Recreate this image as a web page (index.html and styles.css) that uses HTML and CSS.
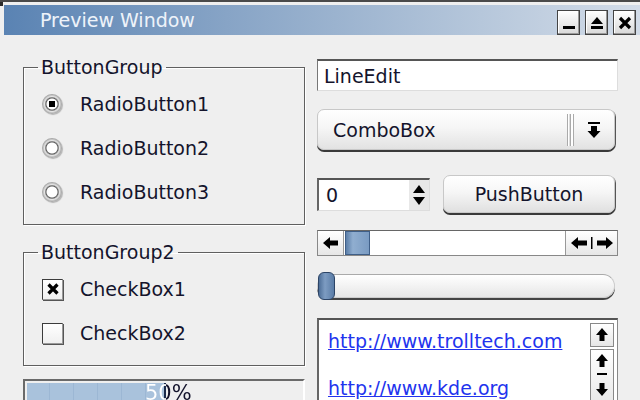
FILE: index.html
```html
<!DOCTYPE html>
<html>
<head>
<meta charset="utf-8">
<link rel="stylesheet" href="styles.css">
</head>
<body>
<div class="frame">
  <div class="titlebar">
    <span class="title">Preview Window</span>
    <div class="tbuttons">
      <span class="tbtn"><svg width="14" height="14" viewBox="0 0 14 14"><rect x="1" y="10" width="12" height="3" fill="#000"/></svg></span>
      <span class="tbtn"><svg width="14" height="14" viewBox="0 0 14 14"><polygon points="7,1 13,8 1,8" fill="#000"/><rect x="1" y="10" width="12" height="3" fill="#000"/></svg></span>
      <span class="tbtn"><svg width="14" height="14" viewBox="0 0 14 14"><path d="M2 2 L12 12 M12 2 L2 12" stroke="#000" stroke-width="3.2"/></svg></span>
    </div>
  </div>
  <div class="content">
    <div class="col left">
      <fieldset class="group g1">
        <legend>ButtonGroup</legend>
        <div class="row"><span class="radio on"><span class="dot"></span></span><span>RadioButton1</span></div>
        <div class="row"><span class="radio"></span><span>RadioButton2</span></div>
        <div class="row"><span class="radio"></span><span>RadioButton3</span></div>
      </fieldset>
      <fieldset class="group g2">
        <legend>ButtonGroup2</legend>
        <div class="row"><span class="check"><svg width="14" height="14" viewBox="0 0 14 14"><path d="M2.5 2.5 L11.5 11.5 M11.5 2.5 L2.5 11.5" stroke="#000" stroke-width="3.2"/></svg></span><span>CheckBox1</span></div>
        <div class="row"><span class="check"></span><span>CheckBox2</span></div>
      </fieldset>
      <div class="progress">
        <div class="fill" style="width:50%"></div>
        <span class="ptext">50%</span>
      </div>
    </div>
    <div class="col right">
      <div class="lineedit">LineEdit</div>
      <div class="combo">
        <span class="ctext">ComboBox</span>
        <span class="csep"></span>
        <svg class="carrow" width="14" height="18" viewBox="0 0 14 18"><rect x="1" y="1" width="12" height="2" fill="#000"/><polygon points="4,5 10,5 10,10 13.5,10 7,17 0.5,10 4,10" fill="#000"/></svg>
      </div>
      <div class="spinrow">
        <div class="spin">
          <span class="stext">0</span>
          <span class="sarrows"><svg width="14" height="24" viewBox="0 0 14 24"><polygon points="7,2 13,10 1,10" fill="#000"/><polygon points="1,14 13,14 7,22" fill="#000"/></svg></span>
        </div>
        <div class="push">PushButton</div>
      </div>
      <div class="hscroll">
        <span class="sbtn lb"><svg width="18" height="14" viewBox="0 0 18 14"><polygon points="1,7 8,1 8,4.5 16,4.5 16,9.5 8,9.5 8,13" fill="#000"/></svg></span>
        <span class="handle"></span>
        <span class="trough"></span>
        <span class="sbtn rb"><svg width="44" height="14" viewBox="0 0 44 14"><polygon points="1,7 8,1 8,4.5 17,4.5 17,9.5 8,9.5 8,13" fill="#000"/><rect x="21" y="1" width="1.5" height="12" fill="#000"/><polygon points="43,7 36,1 36,4.5 27,4.5 27,9.5 36,9.5 36,13" fill="#000"/></svg></span>
      </div>
      <div class="slider">
        <span class="groove"></span>
        <span class="knob"></span>
      </div>
      <div class="listbox">
        <div class="links">
          <a class="link">http://www.trolltech.com</a>
          <a class="link">http://www.kde.org</a>
        </div>
        <div class="vscroll">
          <span class="vbtn"><svg width="14" height="16" viewBox="0 0 14 16"><polygon points="7,1 13,8 9.5,8 9.5,14 4.5,14 4.5,8 1,8" fill="#000"/></svg></span>
          <span class="vbtn tall"><svg width="14" height="44" viewBox="0 0 14 44"><polygon points="7,1 13,8 9.5,8 9.5,14 4.5,14 4.5,8 1,8" fill="#000"/><rect x="2" y="20" width="10" height="2" fill="#000"/><polygon points="7,43 13,36 9.5,36 9.5,30 4.5,30 4.5,36 1,36" fill="#000"/></svg></span>
        </div>
      </div>
    </div>
  </div>
</div>
</body>
</html>
```
FILE: styles.css
```css
html, body {
  margin: 0;
  padding: 0;
  background: #efefef;
  width: 640px;
  height: 400px;
  overflow: hidden;
  font-family: "DejaVu Sans", Verdana, sans-serif;
  font-size: 19px;
  color: #14142c;
}
.frame {
  border-top: 2px solid #4a4a4a;
  height: 398px;
  position: relative;
}
.frame::before {
  content: "";
  position: absolute;
  left: 0;
  top: 0;
  width: 3px;
  height: 4px;
  background: #2a2a2a;
}
.titlebar {
  margin: 3px 0 0 4px;
  height: 30px;
  background: linear-gradient(to right, #5a83b3 0%, #87a4c6 35%, #b6c7db 75%, #d3dce8 100%);
  display: flex;
  align-items: center;
  justify-content: space-between;
}
.title {
  margin-left: 36px;
  color: #eef3f9;
  font-size: 19px;
  text-shadow: 0 0 1px #7a9cc4;
}
.tbuttons {
  display: flex;
  gap: 5px;
  margin-right: 4px;
  align-self: flex-end;
}
.tbtn {
  width: 23px;
  height: 25px;
  box-sizing: border-box;
  border: 1px solid #444;
  background: linear-gradient(#ffffff, #d8d8d8);
  box-shadow: inset -1px -1px 0 #999, inset 1px 1px 0 #fff;
  display: flex;
  align-items: center;
  justify-content: center;
}
.content {
  display: flex;
  gap: 12px;
  padding: 21px 0 0 23px;
}
.col {
  display: flex;
  flex-direction: column;
}
.left {
  width: 282px;
}
.right {
  width: 301px;
}
.group {
  margin: 0;
  padding: 4px 0 10px 14px;
  border: 1px solid #5f5f5f;
  box-shadow: 1px 1px 0 #fff, inset 1px 1px 0 #fff;
  min-width: 0;
}
.group legend {
  padding: 0 3px;
  line-height: 22px;
}
.g2 {
  margin-top: 16px;
}
.row {
  height: 44px;
  display: flex;
  align-items: center;
}
.radio {
  width: 20px;
  height: 20px;
  margin-left: 4px;
  margin-right: 18px;
  border-radius: 50%;
  box-sizing: border-box;
  background: radial-gradient(circle, #ffffff 0 5px, #5e5e5e 6px, #e4e4e4 7.5px, #9a9a9a 10px);
  box-shadow: 1px 1px 1px rgba(0,0,0,0.25);
  display: flex;
  align-items: center;
  justify-content: center;
}
.radio .dot {
  width: 6px;
  height: 6px;
  background: #000;
}
.check {
  width: 21px;
  height: 21px;
  margin-left: 4px;
  margin-right: 17px;
  box-sizing: border-box;
  border: 1px solid #3c3c3c;
  border-right-color: #9a9a9a;
  border-bottom-color: #9a9a9a;
  background: linear-gradient(#ffffff, #f0f0f0);
  box-shadow: 1px 1px 0 #555;
  display: flex;
  align-items: center;
  justify-content: center;
}
.progress {
  margin-top: 13px;
  height: 30px;
  border: 2px solid #6a6a6a;
  border-right-color: #fff;
  border-bottom: none;
  position: relative;
  padding: 2px 0 0 2px;
  box-sizing: border-box;
}
.fill {
  height: 100%;
  background: repeating-linear-gradient(to right, #a9c2dc 0 22px, #9cb7d4 22px 23px, #a9c2dc 23px 24px);
  border-right: 2px solid #1a2a4a;
  width: 137px !important;
}
.ptext {
  position: absolute;
  left: 120px;
  top: 0px;
  font-size: 21px;
  color: #14142c;
  background: linear-gradient(to right, #fff 0 21px, #14142c 21px);
  -webkit-background-clip: text;
  background-clip: text;
  -webkit-text-fill-color: transparent;
}
.lineedit {
  margin-top: 3px;
  height: 32px;
  box-sizing: border-box;
  background: #fff;
  border: 1px solid #777;
  border-top: 2px solid #555;
  border-right-color: #ddd;
  border-bottom-color: #ddd;
  padding-left: 6px;
  display: flex;
  align-items: center;
}
.combo {
  margin-top: 18px;
  width: 298px;
  height: 41px;
  box-sizing: border-box;
  border-radius: 7px;
  border: 1px solid #c8c8c8;
  background: linear-gradient(#ffffff 0%, #f6f6f6 45%, #e2e2e2 100%);
  box-shadow: 0 2px 0 #3a3a3a, 1px 1px 0 #555;
  display: flex;
  align-items: center;
  padding-left: 15px;
}
.ctext {
  flex: 1;
}
.csep {
  width: 5px;
  height: 32px;
  border-left: 1px solid #aaa;
  border-right: 1px solid #aaa;
  margin-right: 13px;
  background: linear-gradient(to right, #fff 0 1px, #ddd 1px 2px, #aaa 2px 3px, #fff 3px);
}
.carrow {
  margin-right: 13px;
}
.spinrow {
  margin-top: 25px;
  display: flex;
  align-items: center;
  gap: 13px;
}
.spin {
  width: 113px;
  height: 33px;
  box-sizing: border-box;
  background: #fff;
  border: 1px solid #888;
  border-top: 2px solid #555;
  border-left: 2px solid #666;
  border-right-color: #ddd;
  border-bottom-color: #ddd;
  display: flex;
  align-items: center;
}
.stext {
  flex: 1;
  padding-left: 7px;
}
.sarrows {
  width: 20px;
  height: 100%;
  background: #e8e8e8;
  display: flex;
  align-items: center;
  justify-content: center;
}
.push {
  width: 172px;
  height: 38px;
  box-sizing: border-box;
  border-radius: 7px;
  border: 1px solid #c8c8c8;
  background: linear-gradient(#ffffff 0%, #f6f6f6 45%, #e0e0e0 100%);
  box-shadow: 0 2px 0 #3a3a3a, 1px 1px 0 #555;
  display: flex;
  align-items: center;
  justify-content: center;
}
.hscroll {
  margin-top: 17px;
  height: 26px;
  box-sizing: border-box;
  display: flex;
  border: 1px solid #888;
  border-top-color: #666;
  background: #fff;
}
.sbtn {
  background: linear-gradient(#ffffff, #e6e6e6);
  display: flex;
  align-items: center;
  justify-content: center;
  box-sizing: border-box;
}
.lb {
  width: 26px;
  border-right: 1px solid #999;
}
.rb {
  width: 52px;
  border-left: 1px solid #999;
}
.handle {
  width: 25px;
  margin-left: 1px;
  background: linear-gradient(to right, #5b7ea8, #90aed0 30%, #7a9bc2);
  border: 1px solid #3f5f88;
  box-sizing: border-box;
}
.trough {
  flex: 1;
}
.slider {
  margin-top: 15px;
  height: 30px;
  position: relative;
  width: 298px;
}
.groove {
  position: absolute;
  left: 0;
  right: 0;
  top: 3px;
  height: 24px;
  border-radius: 12px;
  border: 1px solid #ccc;
  border-top-color: #aaa;
  background: linear-gradient(#ffffff, #e6e6e6);
  box-shadow: 0 2px 0 #444;
  box-sizing: border-box;
}
.knob {
  position: absolute;
  left: 1px;
  top: 1px;
  width: 17px;
  height: 28px;
  border-radius: 6px;
  background: linear-gradient(to right, #4e6f98, #7d9cc2 40%, #5a7ca6);
  border: 1px solid #2c4466;
  box-sizing: border-box;
}
.listbox {
  margin-top: 17px;
  height: 100px;
  box-sizing: border-box;
  background: #fff;
  border: 1px solid #888;
  border-top: 2px solid #555;
  border-left: 2px solid #666;
  display: flex;
}
.links {
  flex: 1;
  padding: 9px 0 0 9px;
  display: flex;
  flex-direction: column;
  gap: 22px;
}
.link {
  color: #2233ee;
  text-decoration: underline;
  line-height: 25px;
}
.vscroll {
  width: 24px;
  margin: 3px 3px 0 0;
  display: flex;
  flex-direction: column;
  gap: 2px;
}
.vbtn {
  height: 24px;
  box-sizing: border-box;
  border: 1px solid #888;
  background: linear-gradient(#ffffff, #e6e6e6);
  display: flex;
  align-items: center;
  justify-content: center;
}
.vbtn.tall {
  height: 60px;
  align-items: flex-start;
  padding-top: 3px;
}
```
